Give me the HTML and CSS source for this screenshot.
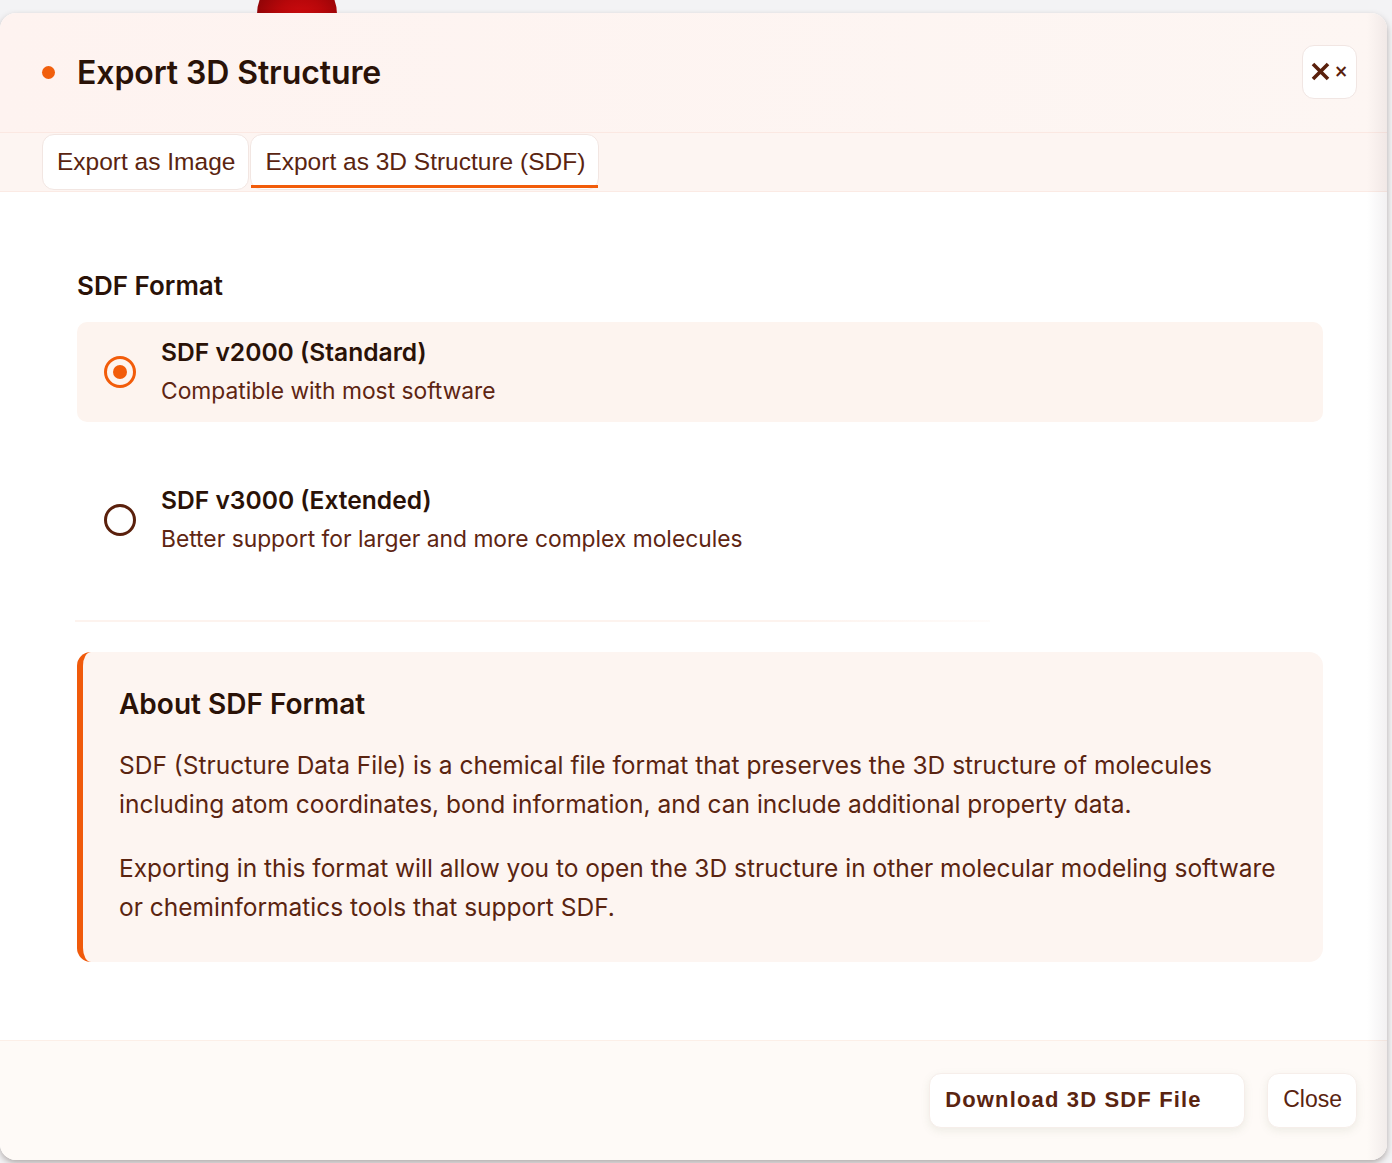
FILE: index.html
```html
<!DOCTYPE html>
<html lang="en">
<head>
<meta charset="utf-8">
<title>Export 3D Structure</title>
<link rel="stylesheet" href="styles.css">
</head>
<body>
<div class="sphere"></div>
<div class="modal">
  <header class="modal-header">
    <div class="title-wrap">
      <span class="dot"></span>
      <h1 class="title">Export 3D Structure</h1>
    </div>
    <button class="close-x" aria-label="Close">
      <svg width="19" height="19" viewBox="0 0 19 19"><path d="M2 2 L17 17 M17 2 L2 17" stroke="#5a200c" stroke-width="3.6" stroke-linecap="butt"/></svg>
      <span class="small-x">×</span>
    </button>
  </header>
  <nav class="tabs">
    <button class="tab">Export as Image</button>
    <button class="tab active">Export as 3D Structure (SDF)</button>
  </nav>
  <main class="content">
    <h2 class="section-title">SDF Format</h2>
    <div class="option selected">
      <span class="radio on"></span>
      <div class="option-text">
        <div class="option-title">SDF v2000 (Standard)</div>
        <div class="option-desc">Compatible with most software</div>
      </div>
    </div>
    <div class="option">
      <span class="radio"></span>
      <div class="option-text">
        <div class="option-title">SDF v3000 (Extended)</div>
        <div class="option-desc">Better support for larger and more complex molecules</div>
      </div>
    </div>
    <div class="divider"></div>
    <section class="info">
      <h3 class="info-title">About SDF Format</h3>
      <p>SDF (Structure Data File) is a chemical file format that preserves the 3D structure of molecules including atom coordinates, bond information, and can include additional property data.</p>
      <p>Exporting in this format will allow you to open the 3D structure in other molecular modeling software or cheminformatics tools that support SDF.</p>
    </section>
  </main>
  <footer class="modal-footer">
    <button class="btn btn-primary">Download 3D SDF File</button>
    <button class="btn">Close</button>
  </footer>
</div>
</body>
</html>
```

FILE: styles.css
```css
* { box-sizing: border-box; }
html, body { margin: 0; padding: 0; }
body {
  background: #f3f3f5;
  font-family: Inter, "Noto Sans", sans-serif;
  height: 1163px;
  overflow: hidden;
  position: relative;
  padding-top: 13px;
}
.sphere {
  position: absolute;
  left: 257px;
  top: -26px;
  width: 80px;
  height: 80px;
  border-radius: 50%;
  background: radial-gradient(circle at 55% 65%, #d90d10 0%, #b8070a 40%, #6e0204 100%);
  z-index: 0;
}
.modal {
  position: relative;
  z-index: 1;
  width: 1387px;
  height: 1147px;
  background: #ffffff;
  border-radius: 16px;
  overflow: hidden;
  display: flex;
  flex-direction: column;
  box-shadow: 0 3px 6px rgba(60, 40, 35, 0.35);
}
.modal::after {
  content: "";
  position: absolute;
  top: 0;
  right: 0;
  width: 20px;
  height: 100%;
  background: linear-gradient(to right, rgba(120, 100, 110, 0), rgba(120, 100, 110, 0.09));
  pointer-events: none;
}
.modal-header {
  height: 120px;
  flex: none;
  display: flex;
  align-items: center;
  justify-content: space-between;
  padding: 0 30px 0 42px;
  background: linear-gradient(90deg, #fef3f0, #fdf6f3);
  border-bottom: 1px solid #fbe8e2;
}
.title-wrap { display: flex; align-items: center; gap: 22px; }
.dot {
  width: 13px; height: 13px; border-radius: 50%;
  background: #f15f0d;
}
.title {
  margin: 0;
  font-size: 32px;
  font-weight: 600;
  color: #2a1207;
  letter-spacing: -0.1px;
}
.close-x {
  width: 55px; height: 54px;
  margin-top: -1px;
  background: #fff;
  border: 1px solid #f1e6e3;
  border-radius: 12px;
  display: flex; align-items: center; justify-content: center; gap: 4px;
  padding: 0 0 2px 0;
  cursor: pointer;
}
.small-x {
  font-family: "DejaVu Sans", sans-serif;
  font-size: 17px;
  font-weight: 700;
  color: #5a200c;
  line-height: 1;
}
.tabs {
  flex: none;
  height: 59px;
  display: flex;
  gap: 1px;
  padding: 1px 0 0 42px;
  background: #fdf5f2;
  border-bottom: 1px solid #fbeae4;
}
.tab {
  height: 56px;
  background: #fff;
  border: 1px solid #f2e6e2;
  border-radius: 12px;
  font-family: "Liberation Sans", Arial, sans-serif;
  font-size: 24.5px;
  color: #5a2410;
  padding: 0 13px 0 14px;
  cursor: pointer;
  position: relative;
}
.tab.active::after {
  content: "";
  position: absolute;
  left: 0; right: 0; bottom: 1px;
  height: 3px;
  background: #f25c0a;
}
.content {
  flex: 1;
  padding: 77px 64px 0 77px;
}
.section-title {
  margin: 0 0 19px 0;
  font-size: 26px;
  line-height: 34px;
  font-weight: 600;
  color: #2a1207;
}
.option {
  height: 100px;
  border-radius: 10px;
  display: flex;
  align-items: center;
  padding-left: 27px;
  gap: 25px;
  margin-bottom: 48px;
}
.option + .option { margin-bottom: 50px; }
.option.selected { background: #fdf4ef; }
.radio {
  flex: none;
  width: 32px; height: 32px;
  border-radius: 50%;
  border: 3px solid #5a200c;
  display: flex; align-items: center; justify-content: center;
}
.radio.on { border-color: #f25c0a; }
.radio.on::after {
  content: "";
  width: 14px; height: 14px; border-radius: 50%;
  background: #f25c0a;
}
.option-text { display: flex; flex-direction: column; gap: 9px; margin-top: -4px; }
.option-title {
  font-size: 24.6px;
  line-height: 32px;
  font-weight: 600;
  color: #2a1207;
}
.option-desc {
  font-size: 22.8px;
  line-height: 28px;
  color: #5e2512;
}
.divider {
  height: 2px;
  width: 915px;
  margin: 0 0 30px -2px;
  background: linear-gradient(90deg, #fdf3ee, #fdf3ee 80%, rgba(253, 243, 238, 0.3));
}
.info {
  background: #fdf5f1;
  border-radius: 14px;
  border-left: 6px solid #f05a0b;
  padding: 32px 36px 32px 36px;
  height: 310px;
}
.info-title {
  margin: 0 0 22px 0;
  font-size: 28px;
  line-height: 40px;
  font-weight: 600;
  color: #2a1207;
}
.info p {
  margin: 0 0 25px 0;
  font-size: 24.5px;
  line-height: 39px;
  color: #5a2410;
}
.modal-footer {
  flex: none;
  height: 120px;
  background: #fefaf7;
  border-top: 1px solid #fcefe8;
  display: flex;
  align-items: center;
  justify-content: flex-end;
  gap: 22px;
  padding: 0 30px 0 0;
}
.btn {
  height: 55px;
  background: #fff;
  border: 1px solid #f6eeea;
  border-radius: 12px;
  font-family: "Liberation Sans", Arial, sans-serif;
  font-size: 23px;
  color: #5a2410;
  padding: 0 14px 2px 15px;
  box-shadow: 0 3px 8px rgba(120, 140, 110, 0.12);
  cursor: pointer;
}
.btn-primary {
  width: 316px;
  text-align: left;
  font-weight: 700;
  font-size: 22px;
  letter-spacing: 1.15px;
  color: #5a2410;
}
```
